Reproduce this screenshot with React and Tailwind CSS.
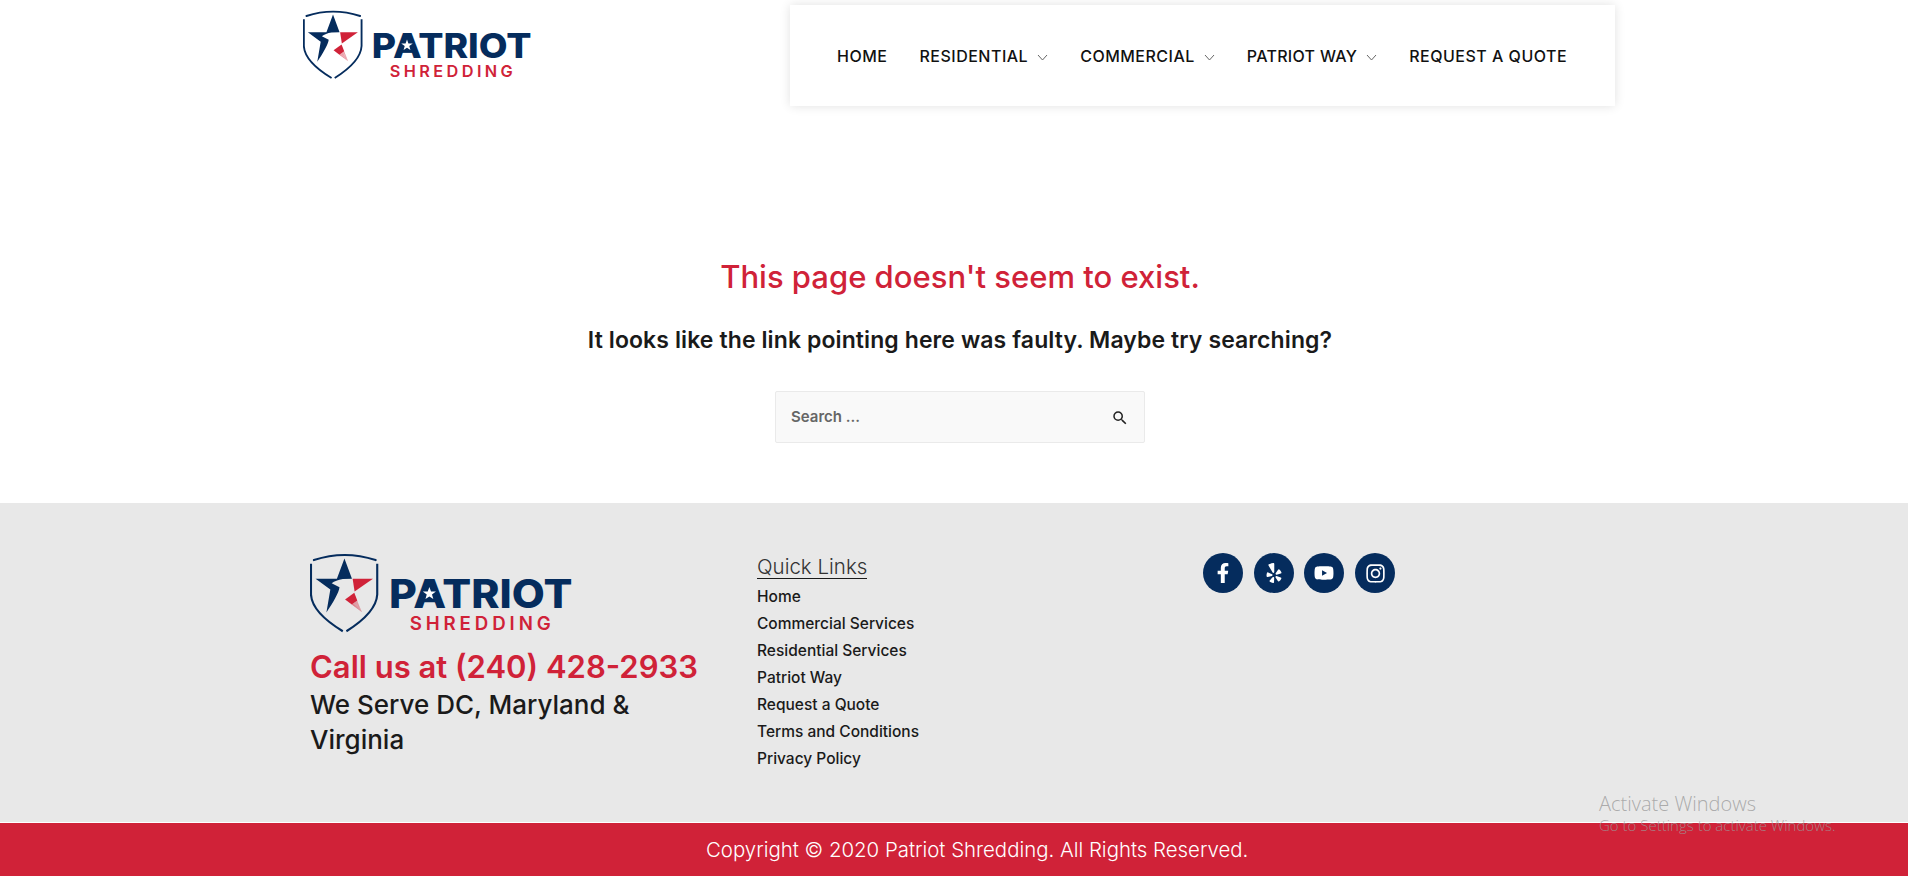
import React from "react";
import { FaFacebookF, FaYelp, FaYoutube, FaInstagram } from "react-icons/fa";
import { MdSearch } from "react-icons/md";

function Logo({ className }) {
  const tip = [188, 203];
  const a = [137, 165];
  const b = [165, 145];
  const wedges = [];
  for (let i = 0; i < 8; i++) {
    const t0 = i / 8;
    const t1 = (i + 0.6) / 8;
    const p = (t) => [a[0] + (b[0] - a[0]) * t + (tip[0] - a[0] - (b[0] - a[0]) * t) * 0.4, a[1] + (b[1] - a[1]) * t + (tip[1] - a[1] - (b[1] - a[1]) * t) * 0.4];
    const p0 = p(t0);
    const p1 = p(t1);
    wedges.push(<polygon key={i} fill="#d02238" opacity="0.7" points={`${p0[0]},${p0[1]} ${p1[0]},${p1[1]} ${tip[0]},${tip[1]}`} />);
  }
  return (
    <svg viewBox="0 0 805 252" className={className} role="img" aria-label="Patriot Shredding">
      <g transform="translate(-30 -24)" fill="none">
        <path d="M42 45 Q135 14 230 45" stroke="#052c5d" strokeWidth="6.5" strokeLinecap="round" />
        <path d="M33 56 L33 150 Q36 205 130 262" stroke="#052c5d" strokeWidth="6.5" />
        <path d="M235 56 L235 150 Q232 205 141 262" stroke="#052c5d" strokeWidth="6.5" />
        <path fill="#052c5d" d="M135 40 L158 102 L130 103 C115 105 105 110 96 116 L120 128 C118 145 100 175 80 205 L92 135 L47 102 L112 102 Z" />
        <path fill="#d02238" d="M160 102 L222 102 L166 141 Z" />
        <polygon fill="#d02238" points={`${a[0]},${a[1]} ${b[0]},${b[1]} ${b[0] + (tip[0] - b[0]) * 0.4},${b[1] + (tip[1] - b[1]) * 0.4} ${a[0] + (tip[0] - a[0]) * 0.4},${a[1] + (tip[1] - a[1]) * 0.4}`} />
        {wedges}
      </g>
      <text x="241" y="168" textLength="559" lengthAdjust="spacingAndGlyphs" fontFamily="Inter, sans-serif" fontWeight="800" fontSize="120" fill="#052c5d">PATRIOT</text>
      <polygon fill="#052c5d" points="352,92 376,92 396,150 332,150" />
      <polygon fill="#fff" points="364,103 369,117 384,117 372,126 376,140 364,132 352,140 356,126 344,117 359,117" />
      <text x="304" y="234" textLength="430" fontFamily="Inter, sans-serif" fontWeight="600" fontSize="57" fill="#d02238">SHREDDING</text>
    </svg>
  );
}

function NavItem({ label, menu, className }) {
  return (
    <a className={`flex items-center whitespace-nowrap ${className}`}>
      <span>{label}</span>
      {menu && (
        <svg viewBox="0 0 11 7" className="ml-[9px] mt-[3px] h-[7px] w-[11px]" fill="none" stroke="#666" strokeWidth="1">
          <polyline points="1,1 5.5,6 10,1" />
        </svg>
      )}
    </a>
  );
}

const quickLinks = ["Home", "Commercial Services", "Residential Services", "Patriot Way", "Request a Quote", "Terms and Conditions", "Privacy Policy"];

function Social({ children }) {
  return <a className="flex h-[40px] w-[40px] items-center justify-center rounded-full bg-[#052c5d] text-white">{children}</a>;
}

export default function App() {
  return (
    <div className="relative flex h-[876px] flex-col overflow-hidden bg-white font-['Inter',sans-serif] text-[#1a1a1a]">
      <header className="flex h-[106px] shrink-0 items-start justify-between pl-[303px] pr-[293px] pt-[5px]">
        <Logo className="mt-[5px] h-[72px] w-[230px]" />
        <nav className="flex h-[101px] w-[825px] items-center bg-white pl-[47px] text-[16px] font-medium tracking-[0.5px] uppercase text-[#111] shadow-[0_0_10px_rgba(0,0,0,0.12)]">
          <NavItem label="Home" className="mr-[32px]" />
          <NavItem label="Residential" menu className="mr-[32px]" />
          <NavItem label="Commercial" menu className="mr-[32px]" />
          <NavItem label="Patriot Way" menu className="mr-[32px] tracking-[0.3px]" />
          <NavItem label="Request a Quote" />
        </nav>
      </header>

      <main className="flex h-[397px] shrink-0 flex-col items-center pl-[12px] pt-[150px]">
        <h1 className="text-[31px] leading-[42px] font-medium text-[#d02238]">This page doesn't seem to exist.</h1>
        <p className="mt-[23px] text-[23px] leading-[38px] font-semibold tracking-[0.1px]">It looks like the link pointing here was faulty. Maybe try searching?</p>
        <form className="mt-[32px] flex h-[52px] w-[370px] items-center justify-between rounded-[2px] border border-[#eaeaea] bg-[#f9f9f9] pl-[15px] pr-[15px]">
          <span className="text-[15px] font-semibold text-[#666]">Search ...</span>
          <MdSearch className="mt-[1px] h-[18px] w-[18px] text-[#222]" />
        </form>
      </main>

      <footer className="flex h-[320px] shrink-0 border-b border-white bg-[#e8e8e8] pl-[310px] pt-[50px]">
        <div className="w-[447px] shrink-0">
          <Logo className="h-[83px] w-[264px]" />
          <p className="mt-[12px] text-[31px] leading-[38px] font-semibold whitespace-nowrap text-[#d02238]">Call us at (240) 428-2933</p>
          <p className="mt-[1px] w-[345px] text-[26px] leading-[35px] font-medium">We Serve DC, Maryland &amp; Virginia</p>
        </div>
        <div className="w-[446px] shrink-0">
          <h3 className="w-fit border-b border-[#1a1a1a] pt-[3px] text-[20.5px] leading-[22px] font-light text-[#333]">Quick Links</h3>
          <ul className="mt-[4px] flex flex-col text-[15.5px] leading-[27px] font-medium">
            {quickLinks.map((l) => (
              <li key={l}>{l}</li>
            ))}
          </ul>
        </div>
        <div className="flex gap-[10.7px]">
          <Social><FaFacebookF size={20} /></Social>
          <Social><FaYelp size={20} /></Social>
          <Social><FaYoutube size={20} /></Social>
          <Social><FaInstagram size={21} /></Social>
        </div>
      </footer>

      <div className="flex flex-1 items-center bg-[#d02238] pl-[706px] pt-[1px] text-[20.4px] font-light text-white">
        Copyright © 2020 Patriot Shredding. All Rights Reserved.
      </div>

      <div className="pointer-events-none absolute left-[1599px] top-[791px] font-['Open_Sans',sans-serif] font-light text-[#9a9a9a]/80">
        <p className="text-[20px] leading-[26px]">Activate Windows</p>
        <p className="text-[15px] leading-[17px]">Go to Settings to activate Windows.</p>
      </div>
    </div>
  );
}
